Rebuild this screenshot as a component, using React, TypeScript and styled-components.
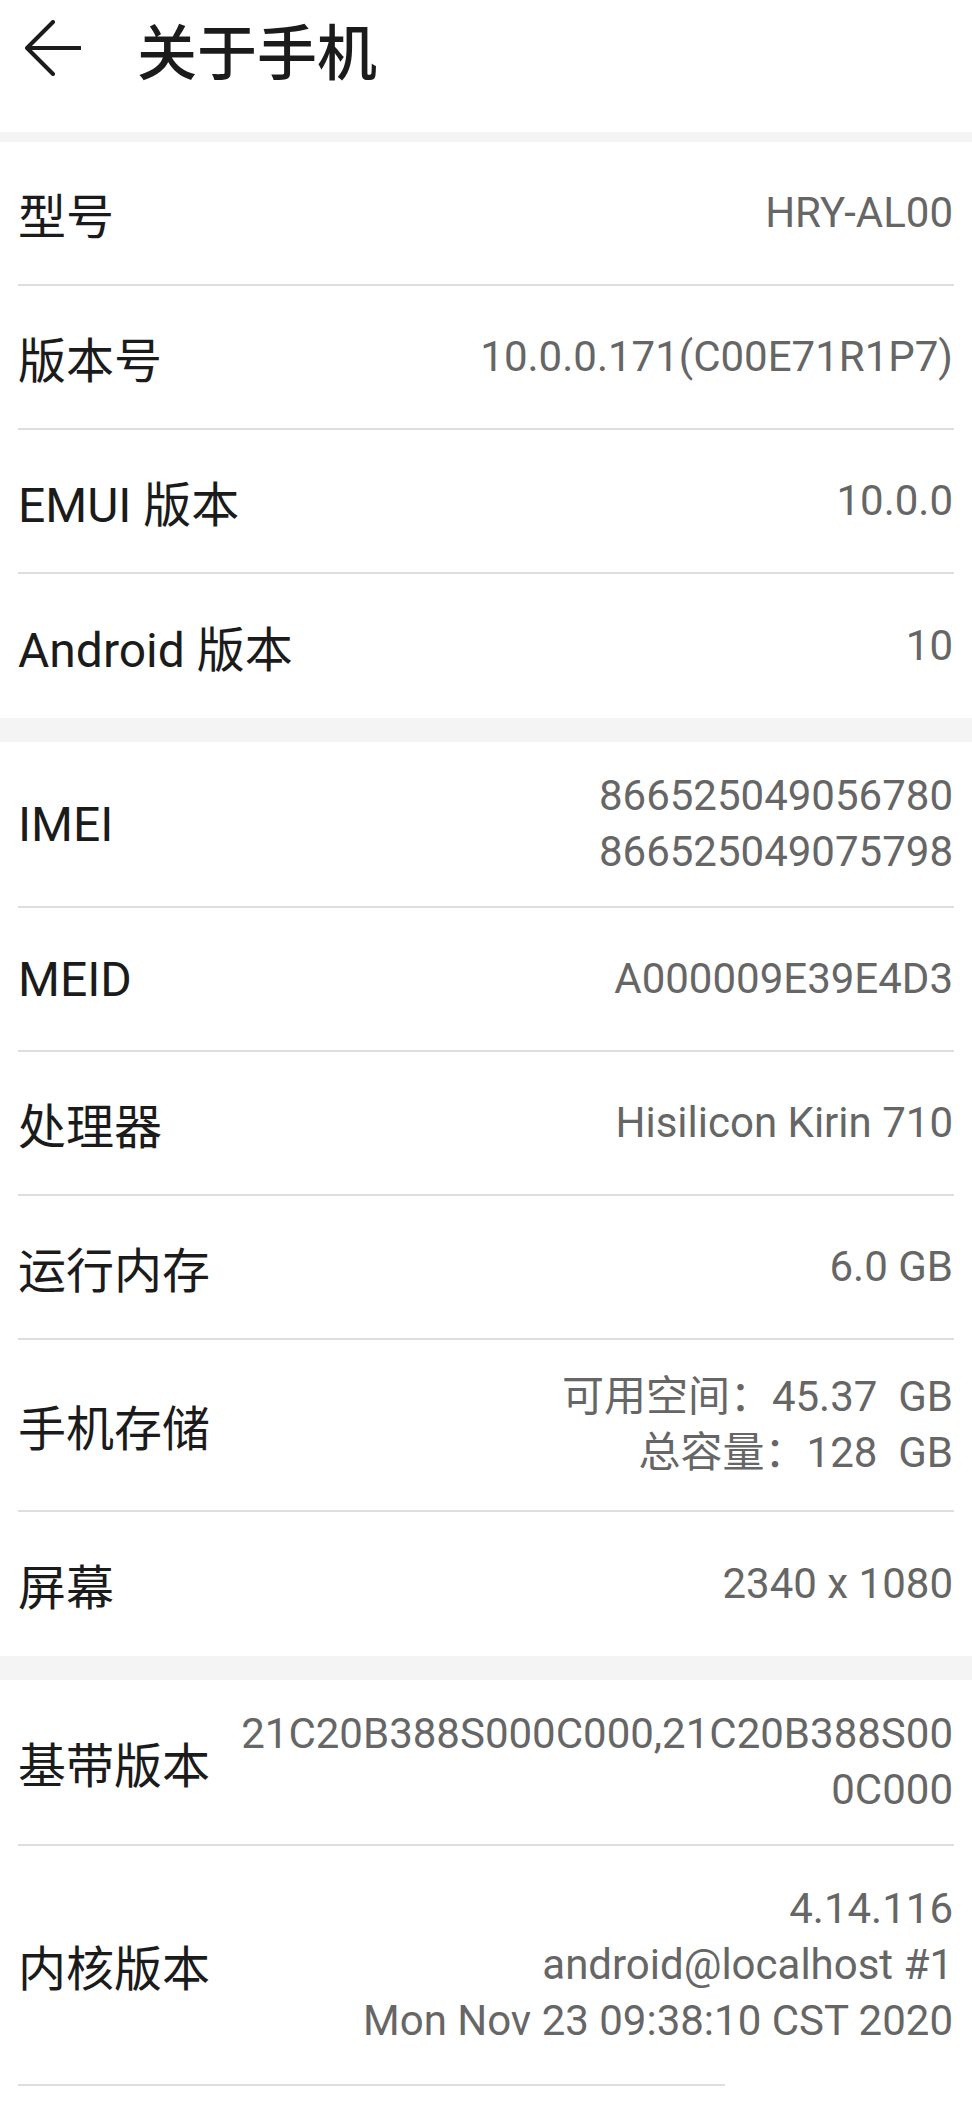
import styled, { createGlobalStyle } from "styled-components";

const GlobalStyle = createGlobalStyle`
  html, body {
    margin: 0;
    padding: 0;
    background: #ffffff;
  }
  * {
    box-sizing: border-box;
  }
`;

interface IInfoRow {
    label: string,
    lines: string[],
    pad?: number,
}

const sections: IInfoRow[][] = [
    [
        { label: "型号", lines: ["HRY-AL00"] },
        { label: "版本号", lines: ["10.0.0.171(C00E71R1P7)"] },
        { label: "EMUI 版本", lines: ["10.0.0"] },
        { label: "Android 版本", lines: ["10"] },
    ],
    [
        { label: "IMEI", lines: ["866525049056780", "866525049075798"], pad: 26 },
        { label: "MEID", lines: ["A000009E39E4D3"] },
        { label: "处理器", lines: ["Hisilicon Kirin 710"] },
        { label: "运行内存", lines: ["6.0 GB"] },
        { label: "手机存储", lines: ["可用空间：45.37  GB", "总容量：128  GB"], pad: 29 },
        { label: "屏幕", lines: ["2340 x 1080"] },
    ],
    [
        { label: "基带版本", lines: ["21C20B388S000C000,21C20B388S000C000"], pad: 26 },
        { label: "内核版本", lines: ["4.14.116", "android@localhost #1", "Mon Nov 23 09:38:10 CST 2020"], pad: 35 },
    ],
];

const Page = styled.div`
  width: 972px;
  background: #ffffff;
  font-family: Roboto, "Noto Sans CJK SC", sans-serif;
`;

const Header = styled.header`
  height: 132px;
  padding: 0 0 36px 25px;
  display: flex;
  align-items: center;
  gap: 56px;
`;

const BackButton = styled.button`
  width: 56px;
  height: 56px;
  padding: 0;
  border: none;
  background: transparent;
  display: flex;
  align-items: center;
  justify-content: center;
`;

const Title = styled.h1`
  margin: 0;
  font-family: "Noto Sans CJK SC", sans-serif;
  font-size: 60px;
  font-weight: 500;
  color: #1b1b1b;
`;

const Section = styled.section<{ $band: number }>`
  border-top: ${(props) => props.$band}px solid #f4f4f4;
  padding: 0 18px;
  background: #ffffff;
`;

const Row = styled.div<{ $pad: number, $last: boolean }>`
  min-height: 144px;
  padding: ${(props) => props.$pad}px 1px ${(props) => props.$pad}px 0;
  display: flex;
  align-items: center;
  gap: 24px;
  border-bottom: ${(props) => (props.$last ? "none" : "2px solid #dedede")};
`;

const Label = styled.div`
  flex-shrink: 0;
  white-space: nowrap;
  font-size: 48px;
  color: #1b1b1b;
`;

const Value = styled.div`
  flex: 1;
  min-width: 0;
  text-align: right;
  font-size: 42px;
  line-height: 56px;
  color: #666666;
  white-space: pre-wrap;
  word-break: break-all;
`;

const PartialRule = styled.div`
  width: 707px;
  height: 2px;
  background: #dedede;
`;

function BackArrow() {
    return (
        <svg width="56" height="56" viewBox="0 0 56 56" fill="none">
            <path
                d="M55 28 H2 M28 2 L2 28 L28 54"
                stroke="#1b1b1b"
                strokeWidth="4"
                strokeLinecap="round"
                strokeLinejoin="round"
            />
        </svg>
    );
}

function App() {
    return (
        <>
            <GlobalStyle />
            <Page>
                <Header>
                    <BackButton aria-label="返回">
                        <BackArrow />
                    </BackButton>
                    <Title>关于手机</Title>
                </Header>
                {sections.map((rows, si) => (
                    <Section key={si} $band={si === 0 ? 10 : 24}>
                        {rows.map((row, ri) => (
                            <Row key={row.label} $pad={row.pad ?? 20} $last={ri === rows.length - 1}>
                                <Label>{row.label}</Label>
                                <Value>
                                    {row.lines.map((line) => (
                                        <div key={line}>{line}</div>
                                    ))}
                                </Value>
                            </Row>
                        ))}
                        {si === sections.length - 1 && <PartialRule />}
                    </Section>
                ))}
            </Page>
        </>
    );
}
export default App;
